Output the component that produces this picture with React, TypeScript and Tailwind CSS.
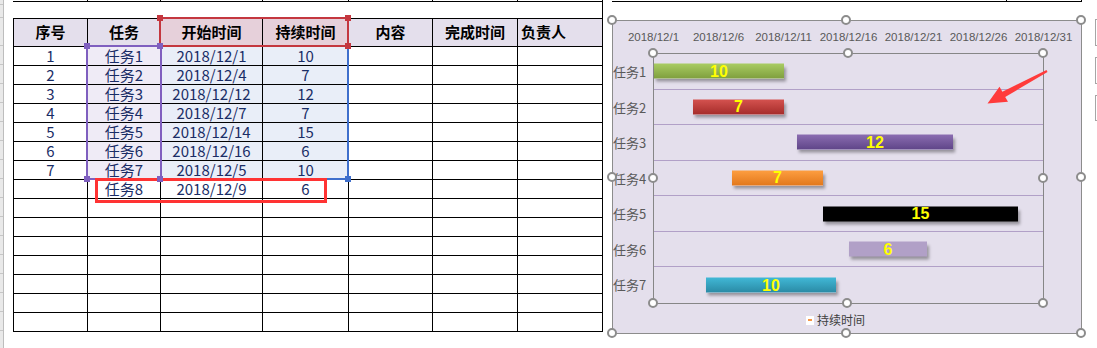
import React from 'react';

type Task = {
  name: string;
  start: number;
  dur: number;
  bar: string;
};

const tableRows: string[][] = [
  ['1', '任务1', '2018/12/1', '10'],
  ['2', '任务2', '2018/12/4', '7'],
  ['3', '任务3', '2018/12/12', '12'],
  ['4', '任务4', '2018/12/7', '7'],
  ['5', '任务5', '2018/12/14', '15'],
  ['6', '任务6', '2018/12/16', '6'],
  ['7', '任务7', '2018/12/5', '10'],
  ['', '任务8', '2018/12/9', '6'],
  ...Array.from({ length: 7 }, () => ['', '', '', '']),
];

const headers = ['序号', '任务', '开始时间', '持续时间', '内容', '完成时间', '负责人'];

const tasks: Task[] = [
  { name: '任务1', start: 0, dur: 10, bar: 'bg-[linear-gradient(#a9cc63,#7f9f3e)]' },
  { name: '任务2', start: 3, dur: 7, bar: 'bg-[linear-gradient(#d4524f,#a52c2a)]' },
  { name: '任务3', start: 11, dur: 12, bar: 'bg-[linear-gradient(#8b6db1,#5f4588)]' },
  { name: '任务4', start: 6, dur: 7, bar: 'bg-[linear-gradient(#fd9e40,#e2781c)]' },
  { name: '任务5', start: 13, dur: 15, bar: 'bg-black' },
  { name: '任务6', start: 15, dur: 6, bar: 'bg-[#b1a0c7]' },
  { name: '任务7', start: 4, dur: 10, bar: 'bg-[linear-gradient(#41b8d6,#2a8aa5)]' },
];

const axisLabels = ['2018/12/1', '2018/12/6', '2018/12/11', '2018/12/16', '2018/12/21', '2018/12/26', '2018/12/31'];

const DAY = 13;

const circleHandles = [
  [612, 20], [846, 20], [1081, 20], [612, 177], [1081, 177], [612, 333], [846, 333], [1081, 333],
  [653, 53], [848, 53], [1043, 53], [653, 178], [1043, 178], [653, 303], [847, 303], [1043, 303],
];

const squareHandles: [number, number, string][] = [
  [160, 18, 'bg-[#c4373f]'],
  [348, 18, 'bg-[#c4373f]'],
  [348, 46, 'bg-[#c4373f]'],
  [87, 46, 'bg-[#7f5fbf]'],
  [160, 46, 'bg-[#7f5fbf]'],
  [87, 179, 'bg-[#7f5fbf]'],
  [160, 179, 'bg-[#7f5fbf]'],
  [348, 179, 'bg-[#3f6fcc]'],
];

function cellBg(row: number, col: number) {
  if (row < 7 && col === 1) return 'bg-[#efebf6]';
  if (row < 7 && (col === 2 || col === 3)) return 'bg-[#e9eef8]';
  return 'bg-white';
}

function LeftStrip() {
  const heights = [5, 13, 28, ...Array.from({ length: 16 }, () => 19)];
  return (
    <div className="flex w-[4px] shrink-0 flex-col overflow-hidden border-r border-[#bdbdbd] bg-[#e9e9e9]">
      {heights.map((h, i) => (
        <div key={i} className="shrink-0 border-b border-[#c6c6c6]" style={{ height: h }} />
      ))}
    </div>
  );
}

function Sheet() {
  return (
    <div className="ml-[9px] flex w-[590px] shrink-0 flex-col font-['Noto_Sans_CJK_SC',sans-serif]">
      <div className="flex h-[2px] border-b border-black">
        <div className="w-[75px] border-r border-black" />
        <div className="w-[73px] border-r border-black" />
        <div className="w-[102px] border-r border-black" />
        <div className="w-[86px] border-r border-black" />
        <div className="w-[84px] border-r border-black" />
        <div className="w-[85px] border-r border-black" />
        <div className="w-[85px] border-r border-black" />
      </div>
      <div className="h-[16px] border-r border-black" />
      <div className="grid grid-cols-[74px_73px_102px_86px_84px_85px_85px] border-l border-t border-black">
        {headers.map((h, i) => (
          <div
            key={h}
            className={`flex h-[28px] items-center border-r border-b border-black text-[15px] font-bold text-black ${
              i === 2 || i === 3 ? 'bg-[#e6d0da]' : 'bg-[#e4dfec]'
            } ${i === 6 ? 'justify-start pl-[3px]' : 'justify-center'}`}
          >
            {h}
          </div>
        ))}
        {tableRows.map((r, ri) =>
          [0, 1, 2, 3, 4, 5, 6].map((ci) => (
            <div
              key={`${ri}-${ci}`}
              className={`flex h-[19px] items-center justify-center border-r border-b border-black text-[15px] leading-[18px] font-normal text-[#1a2d66] ${cellBg(
                ri,
                ci,
              )}`}
            >
              {r[ci] ?? ''}
            </div>
          )),
        )}
      </div>
    </div>
  );
}

function GanttChart() {
  return (
    <div className="ml-[9px] flex shrink-0 flex-col">
      <div className="flex h-[2px] w-[470px] border-b border-black">
        <div className="w-[395px] border-r border-black" />
        <div className="flex-1 border-r border-black" />
      </div>
      <div className="mt-[18px] h-[314px] w-[470px] border border-[#8c8c8c] bg-[#e4dfec] font-['Liberation_Sans','Noto_Sans_CJK_SC',sans-serif]">
        <div className="mt-[8px] ml-[8px] flex h-[16px]">
          {axisLabels.map((d) => (
            <div key={d} className="w-[65px] shrink-0 text-center text-[11.5px] leading-[16px] whitespace-nowrap text-[#595959]">
              {d}
            </div>
          ))}
        </div>
        <div className="mt-[8px] flex">
          <div className="mt-[1px] grid h-[249px] w-[40px] grid-rows-7">
            {tasks.map((t) => (
              <div key={t.name} className="flex items-center font-['Noto_Sans_CJK_SC',sans-serif] text-[13px] text-[#595959]">
                {t.name}
              </div>
            ))}
          </div>
          <div className="grid h-[251px] w-[391px] grid-rows-7 border border-[#868686]">
            {tasks.map((t, i) => (
              <div key={t.name} className={`relative ${i < 6 ? 'border-b border-[#b1a0c7]' : ''}`}>
                <div
                  className={`absolute top-1/2 flex h-[15px] -translate-y-1/2 items-center justify-center text-[16px] leading-none font-bold text-[#ffff00] shadow-[2px_3px_3px_rgba(0,0,0,0.35)] ${t.bar}`}
                  style={{ left: t.start * DAY, width: t.dur * DAY }}
                >
                  {t.dur}
                </div>
              </div>
            ))}
          </div>
        </div>
        <div className="mt-[8px] ml-[193px] flex h-[16px] items-center">
          <div className="flex h-[9px] w-[8px] items-center justify-center bg-white">
            <div className="h-[2px] w-[4px] bg-[#f79646]" />
          </div>
          <span className="ml-[3px] font-['Noto_Sans_CJK_SC',sans-serif] text-[12px] leading-[16px] text-[#404040]">持续时间</span>
        </div>
      </div>
    </div>
  );
}

export default function App() {
  return (
    <div className="relative flex h-[348px] w-[1097px] overflow-hidden bg-white">
      <LeftStrip />
      <Sheet />
      <GanttChart />
      <div className="mt-[19px] ml-[13px] flex w-[20px] shrink-0 flex-col gap-[11px]">
        <div className="h-[27px] border border-[#a6a6a6] bg-white" />
        <div className="h-[27px] border border-[#a6a6a6] bg-white" />
        <div className="h-[26px] border border-[#a6a6a6] bg-white" />
      </div>

      {/* selection outlines on the sheet */}
      <div className="pointer-events-none absolute top-[45px] left-[160px] h-[135px] w-[189px] border-r-2 border-b-2 border-[#3f6fcc]" />
      <div className="pointer-events-none absolute top-[45px] left-[86px] h-[135px] w-[76px] border-2 border-[#7f5fbf]" />
      <div className="pointer-events-none absolute top-[17px] left-[159px] h-[30px] w-[190px] border-2 border-[#c4373f]" />
      <div className="pointer-events-none absolute top-[178px] left-[95px] h-[25px] w-[232px] border-[3px] border-[#ff3333]" />
      {squareHandles.map(([x, y, c], i) => (
        <div key={i} className={`absolute h-[6px] w-[6px] ${c}`} style={{ left: x - 3, top: y - 3 }} />
      ))}

      {/* chart selection handles */}
      {circleHandles.map(([x, y], i) => (
        <div
          key={i}
          className="absolute h-[10px] w-[10px] rounded-full border-2 border-[#8c8c8c] bg-white"
          style={{ left: x - 5, top: y - 5 }}
        />
      ))}

      <svg className="pointer-events-none absolute top-0 left-0" width="1097" height="348">
        <polygon
          points="1046.5,70.1 1002.4,91.8 999.5,86.8 987.5,103.5 1008,101.8 1005.2,97 1047.5,71.9"
          fill="#ff3b3b"
        />
      </svg>
    </div>
  );
}
